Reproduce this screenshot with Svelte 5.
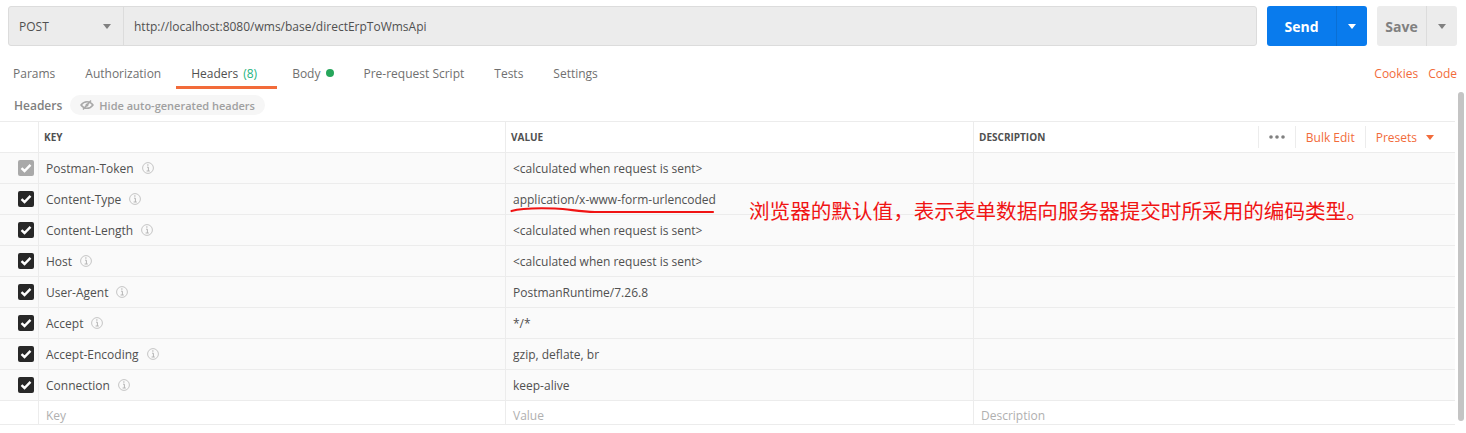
<script>
	const tabs = [
		{ name: 'Params' },
		{ name: 'Authorization' },
		{ name: 'Headers', count: '(8)', active: true },
		{ name: 'Body', dot: true },
		{ name: 'Pre-request Script' },
		{ name: 'Tests' },
		{ name: 'Settings' }
	];
	const rows = [
		{ key: 'Postman-Token', value: '<calculated when request is sent>', locked: true },
		{ key: 'Content-Type', value: 'application/x-www-form-urlencoded' },
		{ key: 'Content-Length', value: '<calculated when request is sent>' },
		{ key: 'Host', value: '<calculated when request is sent>' },
		{ key: 'User-Agent', value: 'PostmanRuntime/7.26.8' },
		{ key: 'Accept', value: '*/*' },
		{ key: 'Accept-Encoding', value: 'gzip, deflate, br' },
		{ key: 'Connection', value: 'keep-alive' }
	];
</script>

<div class="page">
	<div class="urlbar">
		<div class="address">
			<div class="method">
				<span>POST</span>
				<i class="caret grey"></i>
			</div>
			<div class="url">http://localhost:8080/wms/base/directErpToWmsApi</div>
		</div>
		<div class="send">
			<span class="send-label">Send</span>
			<span class="send-more"><i class="caret white"></i></span>
		</div>
		<div class="save">
			<span class="save-label">Save</span>
			<span class="save-more"><i class="caret grey"></i></span>
		</div>
	</div>

	<div class="tabs">
		{#each tabs as tab}
			<div class="tab" class:active={tab.active}>
				{tab.name}
				{#if tab.count}<span class="count">{tab.count}</span>{/if}
				{#if tab.dot}<span class="dot"></span>{/if}
			</div>
		{/each}
		<div class="links">
			<span>Cookies</span>
			<span>Code</span>
		</div>
	</div>

	<div class="subhead">
		<span class="subtitle">Headers</span>
		<span class="pill">
			<svg width="14" height="12" viewBox="0 0 14 12" aria-hidden="true">
				<path d="M1 6c1.600-2.200 3.600-3.300 6-3.300S11.400 3.800 13 6c-1.600 2.200-3.600 3.300-6 3.300S2.600 8.200 1 6z" fill="none" stroke="#a9a9a9" stroke-width="1.500" />
				<circle cx="7" cy="6" r="1.500" fill="#a9a9a9" />
				<path d="M3 10.500 11 1.500" stroke="#a9a9a9" stroke-width="1.500" />
			</svg>
			Hide auto-generated headers
		</span>
	</div>

	<div class="table">
		<div class="row head">
			<div class="cell check"></div>
			<div class="cell">KEY</div>
			<div class="cell">VALUE</div>
			<div class="cell desc">
				DESCRIPTION
				<div class="tools">
					<span class="tool">
						<svg width="16" height="4" viewBox="0 0 16 4" aria-hidden="true">
							<circle cx="2" cy="2" r="1.800" fill="#808080" />
							<circle cx="8" cy="2" r="1.800" fill="#808080" />
							<circle cx="14" cy="2" r="1.800" fill="#808080" />
						</svg>
					</span>
					<span class="tool">Bulk Edit</span>
					<span class="tool">Presets <i class="caret orange"></i></span>
				</div>
			</div>
		</div>
		{#each rows as row}
			<div class="row">
				<div class="cell check">
					<span class="box" class:locked={row.locked}>
						<svg width="12" height="10" viewBox="0 0 12 10" aria-hidden="true">
							<path d="M1.500 5.200 4.500 8 10.500 1.800" fill="none" stroke="#fff" stroke-width="2.400" />
						</svg>
					</span>
				</div>
				<div class="cell">
					{row.key}
					<svg class="info" width="12" height="12" viewBox="0 0 12 12" aria-hidden="true">
						<circle cx="6" cy="6" r="5.400" fill="none" stroke="#c4c4c4" />
						<path d="M5 3h1.600M5 5.200h1.400V9M4.600 9h3.200" fill="none" stroke="#b5b5b5" />
					</svg>
				</div>
				<div class="cell">{row.value}</div>
				<div class="cell"></div>
			</div>
		{/each}
		<div class="row blank">
			<div class="cell check"></div>
			<div class="cell">Key</div>
			<div class="cell">Value</div>
			<div class="cell">Description</div>
		</div>
	</div>

	<div class="scrollbar"></div>

	<svg class="scribble" width="210" height="10" viewBox="0 0 210 10" aria-hidden="true">
		<path d="M1.500 6C10 3.500 30 3 45 3.500 60 4 68 7 85 7L203 7" fill="none" stroke="#f01414" stroke-width="2.200" stroke-linecap="round" />
	</svg>
	<div class="note">浏览器的默认值，表示表单数据向服务器提交时所采用的编码类型。</div>
</div>

<style>
	:global(body) {
		margin: 0;
		background: #fff;
	}
	.page {
		position: relative;
		width: 1466px;
		height: 433px;
		overflow: hidden;
		font-family: 'Open Sans', sans-serif;
		font-size: 12px;
		color: #505050;
	}
	.urlbar {
		display: flex;
		height: 40px;
		padding: 6px 9px 0 8px;
	}
	.address {
		display: flex;
		flex: 1;
		box-sizing: border-box;
		background: #ececec;
		border: 1px solid #dcdcdc;
		border-radius: 3px;
	}
	.method {
		display: flex;
		align-items: center;
		justify-content: space-between;
		box-sizing: border-box;
		width: 115px;
		padding: 0 12px 0 10px;
		border-right: 1px solid #dcdcdc;
	}
	.url {
		display: flex;
		align-items: center;
		padding-left: 10px;
	}
	.caret {
		display: inline-block;
		width: 0;
		height: 0;
		border-left: 4.500px solid transparent;
		border-right: 4.500px solid transparent;
		border-top: 5px solid #808080;
	}
	.caret.white {
		border-top-color: #fff;
	}
	.caret.orange {
		border-top-color: #f26b3a;
		margin-left: 9px;
	}
	.send {
		display: flex;
		width: 100px;
		margin-left: 10px;
		background: #097bed;
		border-radius: 3px;
		color: #fff;
	}
	.send-label {
		display: flex;
		align-items: center;
		justify-content: center;
		width: 69px;
		font-size: 14px;
		font-weight: 700;
	}
	.send-more {
		display: flex;
		flex: 1;
		align-items: center;
		justify-content: center;
		border-left: 1px solid #0a6fd4;
	}
	.save {
		display: flex;
		width: 80px;
		margin-left: 10px;
		background: #ececec;
		border-radius: 3px;
		color: #808080;
	}
	.save-label {
		display: flex;
		align-items: center;
		justify-content: center;
		width: 49px;
		font-size: 14px;
		font-weight: 700;
	}
	.save-more {
		display: flex;
		flex: 1;
		align-items: center;
		justify-content: center;
		border-left: 1px solid #dcdcdc;
	}
	.tabs {
		display: flex;
		height: 43px;
		padding-right: 9px;
		box-sizing: border-box;
	}
	.tab {
		display: flex;
		align-items: center;
		gap: 5px;
		box-sizing: border-box;
		height: 43px;
		padding: 11px 15px 0;
		color: #707070;
		white-space: nowrap;
	}
	.tab:first-child {
		padding-left: 13px;
	}
	.tab.active {
		color: #505050;
		border-bottom: 3px solid #f26b3a;
		padding-top: 14px;
		padding-right: 20px;
	}
	.count {
		color: #26b47f;
	}
	.dot {
		width: 8px;
		height: 8px;
		margin: 0 -1px 0 1px;
		border-radius: 50%;
		background: #26a65b;
	}
	.links {
		display: flex;
		align-items: center;
		gap: 10px;
		margin-left: auto;
		padding-top: 11px;
		color: #f26b3a;
	}
	.subhead {
		display: flex;
		align-items: center;
		gap: 8px;
		height: 32px;
		padding-left: 14px;
		box-sizing: border-box;
		font-size: 11px;
	}
	.subtitle {
		font-size: 12px;
		font-weight: 600;
		color: #808080;
	}
	.pill {
		display: flex;
		align-items: center;
		gap: 5px;
		height: 20px;
		padding: 0 10px;
		border-radius: 10px;
		background: #f6f6f6;
		color: #a0a0a0;
		font-weight: 600;
	}
	.table {
		width: 1455px;
		border-top: 1px solid #ececec;
	}
	.row {
		display: grid;
		grid-template-columns: 39px 467px 468px 1fr;
		box-sizing: border-box;
		height: 31px;
		background: #fafafa;
		border-bottom: 1px solid #ececec;
	}
	.head {
		background: #fff;
		font-size: 10px;
		font-weight: 700;
	}
	.blank {
		height: 24px;
		background: #fff;
		color: #b0b0b0;
	}
	.cell {
		display: flex;
		align-items: center;
		gap: 8px;
		box-sizing: border-box;
		padding-left: 7px;
		border-right: 1px solid #ececec;
		white-space: nowrap;
	}
	.cell:last-child {
		border-right: 0;
	}
	.head .cell {
		padding-left: 5px;
	}
	.blank .cell {
		padding-top: 6px;
	}
	.cell.check {
		justify-content: flex-end;
		padding: 0 4px 0 0;
	}
	.box {
		display: flex;
		align-items: center;
		justify-content: center;
		width: 16px;
		height: 16px;
		border-radius: 2px;
		background: #282828;
	}
	.box.locked {
		background: #a9a9a9;
	}
	.desc {
		justify-content: space-between;
	}
	.tools {
		display: flex;
		align-items: center;
		height: 22px;
		padding-right: 11px;
		font-size: 12px;
		font-weight: 400;
		color: #f26b3a;
	}
	.tool {
		display: flex;
		align-items: center;
		height: 22px;
		padding: 0 10px;
		border-left: 1px solid #ececec;
	}
	.scrollbar {
		position: absolute;
		left: 1458px;
		top: 92px;
		width: 6px;
		height: 329px;
		border-radius: 3px;
		background: #c4c4c4;
	}
	.scribble {
		position: absolute;
		left: 510px;
		top: 205px;
	}
	.note {
		position: absolute;
		left: 749px;
		top: 196px;
		font-family: 'Noto Sans CJK SC', sans-serif;
		font-size: 20.600px;
		line-height: 28px;
		color: #f01414;
		white-space: nowrap;
	}
</style>
